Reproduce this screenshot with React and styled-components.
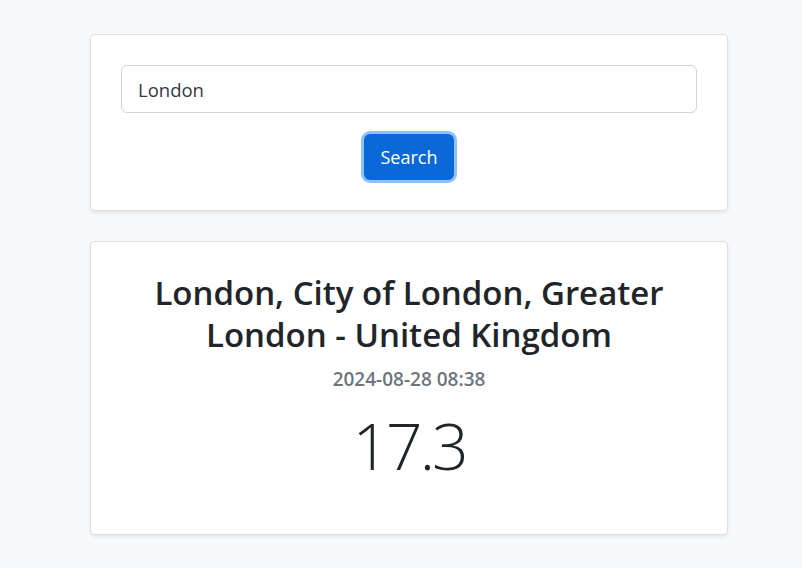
import styled, { createGlobalStyle } from "styled-components";
import { useState } from "react";

const GlobalStyle = createGlobalStyle`
  * { box-sizing: border-box; }
  body {
    margin: 0;
    background-color: #f8f9fa;
    font-family: "Open Sans", "Noto Sans", sans-serif;
    color: #212529;
  }
`;

export default function App() {
  const [city, setCity] = useState("London");

  return (
    <Page>
      <GlobalStyle />
      <Card>
        <SearchBody>
          <Input value={city} onChange={(e) => setCity(e.target.value)} />
          <Button>Search</Button>
        </SearchBody>
      </Card>
      <Card>
        <WeatherBody>
          <Title>London, City of London, Greater London - United Kingdom</Title>
          <Time>2024-08-28 08:38</Time>
          <Temp>17.3</Temp>
        </WeatherBody>
      </Card>
    </Page>
  );
}

const Page = styled.div`
  display: flex;
  flex-direction: column;
  gap: 30px;
  padding: 34px 74px 34px 90px;
`;

const Card = styled.div`
  background-color: #ffffff;
  border: 1px solid rgba(0, 0, 0, 0.125);
  border-radius: 5px;
  box-shadow: 0 2px 4px rgba(0, 0, 0, 0.075);
`;

const SearchBody = styled.div`
  display: flex;
  flex-direction: column;
  align-items: center;
  gap: 21px;
  padding: 30px;
`;

const Input = styled.input`
  width: 100%;
  height: 48px;
  padding: 0 16px;
  font-family: "Open Sans", "Noto Sans", sans-serif;
  font-size: 18.5px;
  color: #343a40;
  border: 1px solid #ced4da;
  border-radius: 6px;
  outline: none;
`;

const Button = styled.button`
  width: 90px;
  height: 46px;
  font-family: "Open Sans", "Noto Sans", sans-serif;
  font-size: 18px;
  color: #ffffff;
  background-color: #0a68d8;
  border: none;
  border-radius: 6px;
  box-shadow: 0 0 0 3px #8fc1f9;
  cursor: pointer;
`;

const WeatherBody = styled.div`
  display: flex;
  flex-direction: column;
  align-items: center;
  text-align: center;
  padding: 30px 30px 46px;
`;

const Title = styled.h2`
  margin: 0;
  font-size: 33px;
  font-weight: 600;
  line-height: 42px;
  color: #212529;
`;

const Time = styled.div`
  margin-top: 10px;
  font-size: 19px;
  font-weight: 600;
  color: #6c757d;
`;

const Temp = styled.div`
  margin-top: 12px;
  font-size: 64px;
  font-weight: 300;
  line-height: 84px;
  letter-spacing: -3px;
  color: #212529;
`;
